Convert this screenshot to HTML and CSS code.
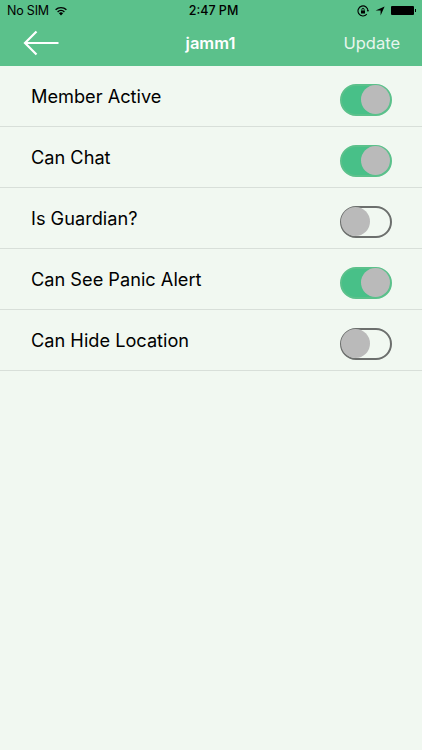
FILE: index.html
```html
<!DOCTYPE html>
<html>
  <head>
    <link rel="stylesheet" href="styles.css">
  </head>
  <body>
    <header class="top">
      <div class="status">
        <div class="status-left">
          <span>No SIM</span>
          <svg class="wifi" viewBox="0 0 14 11" width="14" height="11">
            <path d="M7 10.6 4.9 8.3a3 3 0 0 1 4.2 0Z" fill="#000"/>
            <path d="M3.6 6.9a4.9 4.9 0 0 1 6.8 0" fill="none" stroke="#000" stroke-width="1.4"/>
            <path d="M1.6 4.8a7.7 7.7 0 0 1 10.8 0" fill="none" stroke="#000" stroke-width="1.4"/>
          </svg>
        </div>
        <span class="clock">2:47 PM</span>
        <div class="status-right">
          <svg viewBox="0 0 12 12" width="12" height="12">
            <path d="M9.8 9.2A5 5 0 1 1 11 6" fill="none" stroke="#000" stroke-width="1.1"/>
            <path d="M11.9 5.2 11 6.9 9.8 5.3Z" fill="#000"/>
            <rect x="4" y="5.5" width="4" height="3" fill="#000"/>
            <path d="M4.9 5.5V4.4a1.1 1.1 0 0 1 2.2 0v1.1" fill="none" stroke="#000" stroke-width=".9"/>
          </svg>
          <svg viewBox="0 0 10 10" width="10" height="10">
            <path d="M9.6.4 5.6 9.4V4.4H.6Z" fill="#000"/>
          </svg>
          <div class="battery"></div>
        </div>
      </div>
      <nav class="nav">
        <svg class="back" viewBox="0 0 36 26" width="36" height="26">
          <path d="M35.5 13H2M13.5 1.5 2 13l11.5 11.5" fill="none" stroke="#fff" stroke-width="2.2"/>
        </svg>
        <span class="title">jamm1</span>
        <span class="update">Update</span>
      </nav>
    </header>

    <ul class="settings">
      <li class="row">
        <span>Member Active</span>
        <div class="toggle on"><div class="knob"></div></div>
      </li>
      <li class="row">
        <span>Can Chat</span>
        <div class="toggle on"><div class="knob"></div></div>
      </li>
      <li class="row">
        <span>Is Guardian?</span>
        <div class="toggle"><div class="knob"></div></div>
      </li>
      <li class="row">
        <span>Can See Panic Alert</span>
        <div class="toggle on"><div class="knob"></div></div>
      </li>
      <li class="row">
        <span>Can Hide Location</span>
        <div class="toggle"><div class="knob"></div></div>
      </li>
    </ul>
  </body>
</html>
```

FILE: styles.css
```css
html,
body {
  height: 100%;
}

body {
  margin: 0;
  background: #f1f8f1;
  font-family: Inter, "Liberation Sans", sans-serif;
  color: #000;
  overflow: hidden;
}

.top {
  background: #5bc18b;
  height: 66px;
}

.status {
  display: flex;
  justify-content: space-between;
  align-items: center;
  position: relative;
  height: 21px;
  padding: 0 8px 0 7px;
  font-size: 12.5px;
}

.status-left {
  display: flex;
  align-items: center;
  gap: 5px;
}

.status-left span {
  letter-spacing: -0.2px;
}

.clock {
  position: absolute;
  left: 5px;
  right: 0;
  text-align: center;
  font-weight: 500;
}

.status-right {
  display: flex;
  align-items: center;
  gap: 6px;
}

.battery {
  width: 23px;
  height: 9px;
  background: #000;
  position: relative;
  border-radius: 1px;
}

.battery::after {
  content: "";
  position: absolute;
  right: -2px;
  top: 3px;
  width: 1px;
  height: 3px;
  background: #000;
}

.nav {
  display: flex;
  align-items: center;
  justify-content: space-between;
  position: relative;
  height: 43px;
  padding: 0 22px 0 23px;
  color: #fff;
}

.back {
  display: block;
}

.title {
  position: absolute;
  left: -1px;
  right: 0;
  text-align: center;
  font-size: 16.5px;
  font-weight: 600;
}

.update {
  font-size: 16.5px;
  color: #e8f6ee;
}

.settings {
  list-style: none;
  margin: 0;
  padding: 0;
}

.row {
  display: flex;
  align-items: center;
  justify-content: space-between;
  height: 60px;
  padding: 0 30px 0 31px;
  border-bottom: 1px solid #d8dfd9;
  font-size: 18.2px;
  line-height: 60px;
}

.toggle {
  box-sizing: border-box;
  display: flex;
  align-items: center;
  width: 52px;
  height: 32px;
  margin-top: 7px;
  border: 2px solid #6c6f6d;
  border-radius: 16px;
  background: #f1f8f1;
}

.toggle.on {
  justify-content: flex-end;
  border-color: #5bc18b;
  background: #48c088;
}

.knob {
  flex: none;
  width: 29px;
  height: 29px;
  margin: 0 -1px;
  border-radius: 50%;
  background: #bababa;
}

.toggle.on .knob {
  margin: 0;
}
```
